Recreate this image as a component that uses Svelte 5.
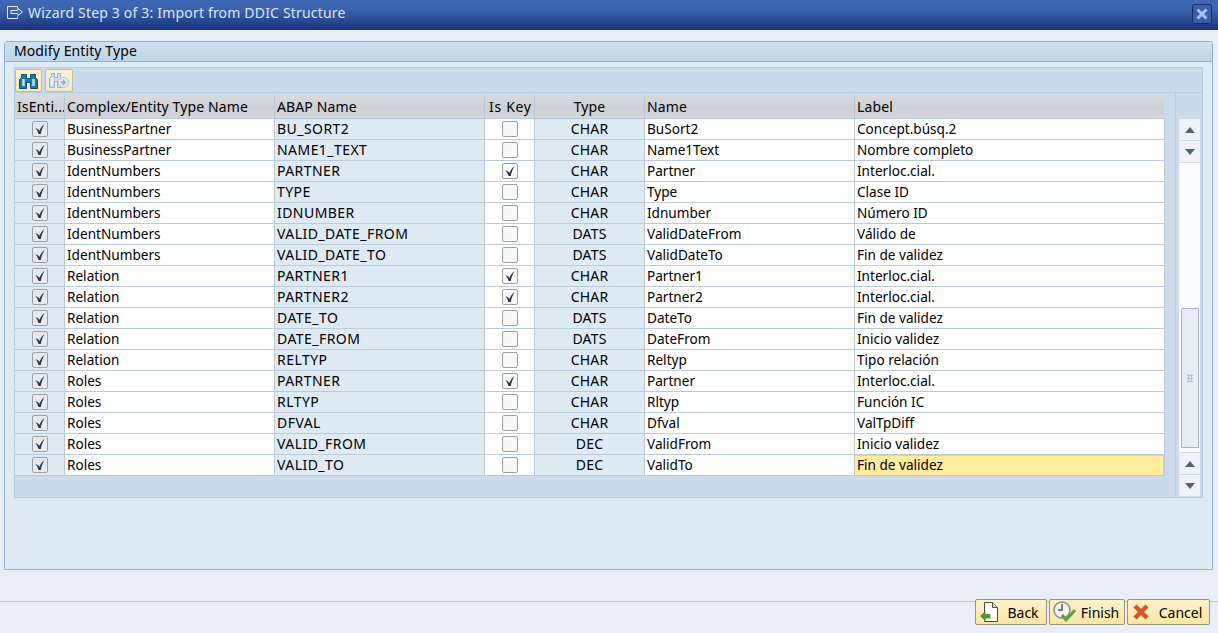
<script>
  const rows = [
    ['BusinessPartner','BU_SORT2',0,'CHAR','BuSort2','Concept.búsq.2'],
    ['BusinessPartner','NAME1_TEXT',0,'CHAR','Name1Text','Nombre completo'],
    ['IdentNumbers','PARTNER',1,'CHAR','Partner','Interloc.cial.'],
    ['IdentNumbers','TYPE',0,'CHAR','Type','Clase ID'],
    ['IdentNumbers','IDNUMBER',0,'CHAR','Idnumber','Número ID'],
    ['IdentNumbers','VALID_DATE_FROM',0,'DATS','ValidDateFrom','Válido de'],
    ['IdentNumbers','VALID_DATE_TO',0,'DATS','ValidDateTo','Fin de validez'],
    ['Relation','PARTNER1',1,'CHAR','Partner1','Interloc.cial.'],
    ['Relation','PARTNER2',1,'CHAR','Partner2','Interloc.cial.'],
    ['Relation','DATE_TO',0,'DATS','DateTo','Fin de validez'],
    ['Relation','DATE_FROM',0,'DATS','DateFrom','Inicio validez'],
    ['Relation','RELTYP',0,'CHAR','Reltyp','Tipo relación'],
    ['Roles','PARTNER',1,'CHAR','Partner','Interloc.cial.'],
    ['Roles','RLTYP',0,'CHAR','Rltyp','Función IC'],
    ['Roles','DFVAL',0,'CHAR','Dfval','ValTpDiff'],
    ['Roles','VALID_FROM',0,'DEC','ValidFrom','Inicio validez'],
    ['Roles','VALID_TO',0,'DEC','ValidTo','Fin de validez'],
  ];
</script>

{#snippet tick()}
  <svg width="12" height="12" viewBox="0 0 12 12"><path d="M1.500 5L4.300 6.500 5.300 8C6.300 5.500 8 3 10.500 1 8.800 4 7.400 7 6.800 11H4.500C4 9 3 7 1.500 5z" fill="#2f3645"/></svg>
{/snippet}

<div class="win">
  <div class="title">
    <svg class="ticon" width="17" height="14" viewBox="0 0 17 14" fill="none" stroke="#e3ecf8" stroke-width="1"><path d="M10.500 2.500V.5h-10v12h10v-2M4 4.500h7V2.500l4.500 3.500L11 9.500V7.500H4z"/></svg>
    <span>Wizard Step 3 of 3: Import from DDIC Structure</span>
    <div class="close"><svg width="12" height="12" viewBox="0 0 12 12"><path d="M1.500 1.500l9 9M10.500 1.500l-9 9" stroke="#a3c3f7" stroke-width="3"/></svg></div>
  </div>

  <div class="content">
    <div class="panel">
      <div class="phead">Modify Entity Type</div>
      <div class="frame">
        <div class="toolbar">
          <div class="tbtn on">
            <svg width="19" height="16" viewBox="0 0 19 16"><path d="M2.500 1.500h5v4h4v-4h5v3l2 2v9h-7v-6h-4v6h-7v-9l2-2z" fill="#1e77ad" stroke="#0f4f7e"/><path d="M4.500 6v7M14.500 6v7" stroke="#bfe0f2" stroke-width="2.500"/></svg>
          </div>
          <div class="tbtn off">
            <svg width="22" height="17" viewBox="0 0 22 17"><path d="M3.500 1.500h3v4h3v-4h3v3l1 2v9h-4v-6h-3v6h-5v-9l2-2z" fill="#cfe0ec" stroke="#8fb5cf"/><path d="M4 6v7" stroke="#eef5fa" stroke-width="2"/><circle cx="15.500" cy="10.500" r="5" fill="#f4f2e8" stroke="#b0c4d2"/><path d="M15.500 7.500v6M12.500 10.500h6" stroke="#8fb5cf" stroke-width="2"/></svg>
          </div>
        </div>

        <div class="main">
          <div class="tablecol">
            <div class="thead">
              <div class="th">IsEnti...</div>
              <div class="th">Complex/Entity Type Name</div>
              <div class="th">ABAP Name</div>
              <div class="th key">Is Key</div>
              <div class="th ctr">Type</div>
              <div class="th">Name</div>
              <div class="th">Label</div>
            </div>
            {#each rows as r, i}
              <div class="tr">
                <div class="td chk ro"><span class="box dis">{@render tick()}</span></div>
                <div class="td ed">{r[0]}</div>
                <div class="td ro caps">{r[1]}</div>
                <div class="td chk ed">
                  <span class="box">
                    {#if r[2]}{@render tick()}{/if}
                  </span>
                </div>
                <div class="td ro ctr caps2">{r[3]}</div>
                <div class="td ed">{r[4]}</div>
                <div class="td ed" class:sel={i === 16}>{#if i === 16}<span class="selin">{r[5]}</span>{:else}{r[5]}{/if}</div>
              </div>
            {/each}
          </div>
          <div class="scroll">
            <div class="sbtn"><i class="up"></i></div>
            <div class="sbtn"><i class="down"></i></div>
            <div class="strack">
              <div class="thumb"><span class="grip"></span></div>
            </div>
            <div class="sbtn"><i class="up"></i></div>
            <div class="sbtn"><i class="down"></i></div>
          </div>
        </div>
      </div>
    </div>
  </div>

  <div class="footer">
    <button class="btn back">
      <svg width="21" height="22" viewBox="0 0 21 22"><path d="M5.500 1.500h8l5 5v14h-13z" fill="#fff" stroke="#4a4a4a"/><path d="M13.500 1.500v5h5" fill="#e4e4e4" stroke="#4a4a4a"/><path d="M1 15l5.500-5v3h5v4.500h-5V20z" fill="#4f9a35"/></svg>
      <span>Back</span>
    </button>
    <button class="btn finish">
      <svg width="23" height="22" viewBox="0 0 23 22"><circle cx="9" cy="9" r="8" fill="#f6f6f0" stroke="#8a8a8a" stroke-width="1.500"/><path d="M9 3v6H5" fill="none" stroke="#555" stroke-width="1.500"/><path d="M9 14l4 5 9-10" fill="none" stroke="#5fa23a" stroke-width="3"/></svg>
      <span>Finish</span>
    </button>
    <button class="btn cancel">
      <svg width="16" height="16" viewBox="0 0 16 16"><path d="M2 2l12 12M14 2L2 14" stroke="#d4552a" stroke-width="4.500"/></svg>
      <span>Cancel</span>
    </button>
  </div>
</div>

<style>
  :global(body) { margin: 0; background: #e8eff7; }
  .win {
    width: 1218px; height: 633px; display: flex; flex-direction: column; overflow: hidden;
    font-family: "Noto Sans", sans-serif; font-size: 14px; color: #000; background: #e8eff7;
  }
  .title {
    height: 30px; flex: none; display: flex; align-items: flex-start; padding: 0 6px 0 7px; box-sizing: border-box;
    background: linear-gradient(#3f68b6, #3c63b0 30%, #16337a);
    color: #dbe6f5; line-height: 26px; letter-spacing: .18px;
  }
  .ticon { margin: 6px 4px 0 0; }
  .title span { flex: 1; }
  .close {
    width: 20px; height: 20px; box-sizing: border-box; border: 1px solid #1c2f5c; border-radius: 2px; margin-top: 4px;
    background: #3a5eac; display: flex; align-items: center; justify-content: center;
  }
  .content { flex: none; height: 571px; padding: 11px 5px 0 4px; box-sizing: border-box; }
  .panel {
    height: 529px; box-sizing: border-box; border: 1px solid #8fb0d0; border-radius: 3px 3px 0 0;
    background: #deeaf4; display: flex; flex-direction: column;
  }
  .phead {
    height: 20px; flex: none; box-sizing: border-box; padding: 0 0 0 9px; line-height: 18px; letter-spacing: .1px;
    background: linear-gradient(#cfe1f1, #bed6ea); border-bottom: 1px solid #8fb0d0;
  }
  .frame {
    margin: 5px 9px 0; width: 1189px; height: 431px; box-sizing: border-box;
    background: #cbdbe9; border: 1px solid #bccbdb; display: flex; flex-direction: column;
  }
  .toolbar { height: 25px; flex: none; display: flex; gap: 3px; padding: 1px 0 0 0; box-sizing: border-box; border-bottom: 1px solid #bccbdb; }
  .tbtn {
    width: 27px; height: 23px; box-sizing: border-box; border: 1px solid #c9bd90; border-radius: 2px;
    background: linear-gradient(#fdf3cd, #fbe8a8); display: flex; align-items: center; justify-content: center;
  }
  .tbtn.off { width: 28px; background: linear-gradient(#f7f1da, #f2ead0); }
  .main { display: flex; flex: 1; min-height: 0; }
  .tablecol { width: 1150px; flex: none; }
  .thead, .tr { display: grid; grid-template-columns: 50px 210px 210px 50px 110px 210px 310px; width: 1150px; }
  .thead {
    height: 26px; padding-top: 2px; box-sizing: border-box; letter-spacing: .12px;
    background: linear-gradient(#cbdbe9 2px, #d8dade 2px, #cdd0d5 60%, #d4d7db);
    border-bottom: 1px solid #b9c7d8;
    clip-path: polygon(0 0, 100% 0, 100% 35%, calc(100% - 1.5px) 60%, 100% 85%, 100% 100%, 0 100%);
  }
  .th { padding: 0 0 0 2px; line-height: 23px; border-right: 1px solid #b9c7d8; box-sizing: border-box; white-space: nowrap; overflow: hidden; }
  .th:last-child { border-right: 0; }
  .th.key { padding-left: 4px; letter-spacing: .7px; }
  .tr { height: 21px; }
  .td {
    box-sizing: border-box; padding-left: 2px; line-height: 20px; font-size: 13.6px;
    border-right: 1px solid #bccbdb; border-bottom: 1px solid #bccbdb; white-space: nowrap;
  }
  .caps { font-size: 14px; letter-spacing: .45px; }
  .caps2 { font-size: 14px; letter-spacing: .2px; }
  .ed { background: #fff; }
  .ro { background: #deeaf4; }
  .ctr { text-align: center; padding-left: 0; }
  .chk { display: flex; align-items: center; justify-content: center; padding: 0; }
  .box {
    width: 16px; height: 16px; box-sizing: border-box; border: 1px solid #a0a0a0; border-radius: 2px;
    background: #f8f9fa; display: flex; align-items: center; justify-content: center;
  }
  .box.dis { background: #e6e9ee; }
  .sel { background: #c5d2e0; padding: 0; }
  .selin { display: block; height: 19px; margin-top: 1px; padding-left: 2px; line-height: 18px; background: #ffec9c; margin-right: 1px; }
  .scroll {
    flex: none; box-sizing: border-box; border-left: 1px solid #bccbdb;
    padding: 26px 0 1px 3px; margin-left: 10px; display: flex; flex-direction: column; gap: 1px; width: 26px;
  }
  .sbtn { width: 21px; height: 21px; flex: none; background: #eef3f9; display: flex; align-items: center; justify-content: center; }
  .sbtn i { display: block; width: 0; height: 0; border-left: 5px solid transparent; border-right: 5px solid transparent; }
  .up { border-bottom: 6px solid #4d6478; }
  .down { border-top: 6px solid #4d6478; }
  .strack { flex: 1; min-height: 0; background: #fbfcfd; display: flex; flex-direction: column; justify-content: flex-end; width: 21px; }
  .thumb {
    height: 140px; box-sizing: border-box; border: 1px solid #a5b3c2; border-radius: 1px; margin: 0 1px 4px 2px;
    background: linear-gradient(90deg, #e2eaf3, #e9eff6); display: flex; align-items: center; justify-content: center;
  }
  .grip { width: 6px; height: 8px; background: radial-gradient(#b0bdcc 50%, transparent 55%) 0 0 / 3px 3px; }
  .footer {
    flex: 1; display: flex; justify-content: flex-end; gap: 2px; padding: 0 8px 0 0; align-items: flex-start; box-sizing: border-box;
    border-top: 1px solid #b8c2cc;
  }
  .btn {
    height: 26px; box-sizing: border-box; border: 1px solid #9a9478; border-radius: 2px; margin-top: -3px;
    background: linear-gradient(#fdf2cc, #fbe6a4); padding: 0 0 0 3px; display: flex; align-items: center; font: inherit; color: #000;
  }
  .back { width: 72px; } .finish { width: 76px; } .cancel { width: 83px; padding-left: 5px; }
  .btn span { flex: 1; text-align: center; }
  .cancel span { padding-left: 3px; }
</style>
